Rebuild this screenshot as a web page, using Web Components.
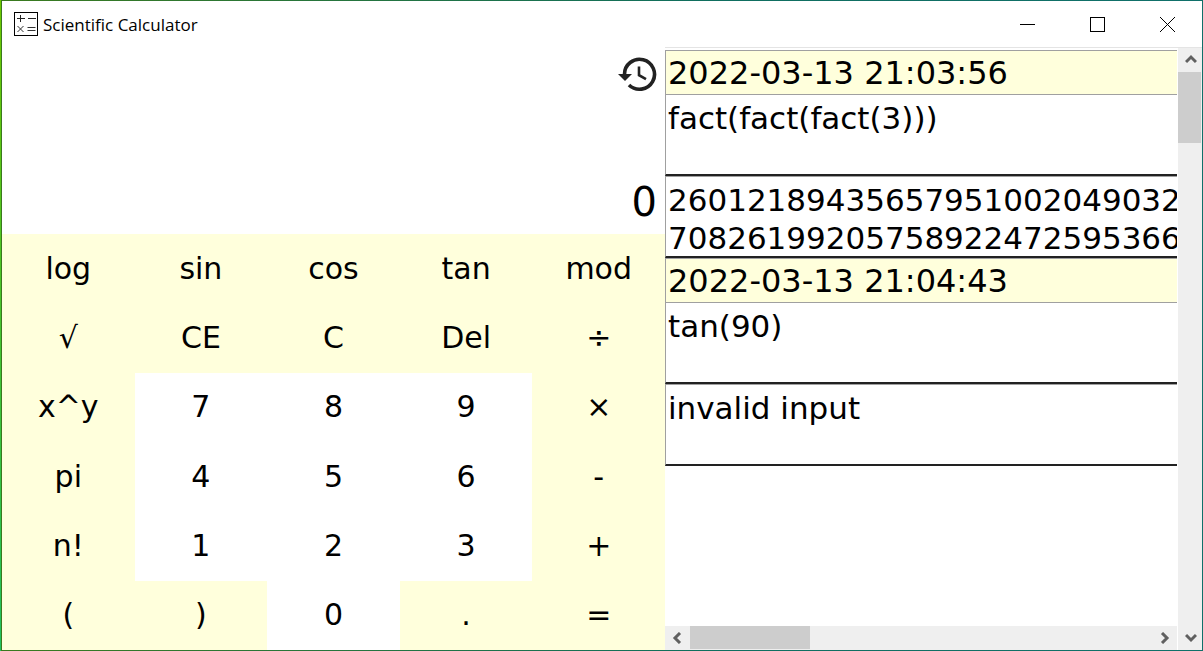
<!DOCTYPE html>
<html lang="en">
<head>
<meta charset="utf-8">
<title>Scientific Calculator</title>
<style>
  html, body { margin: 0; height: 100%; background: #fff; }
  body { font-family: "DejaVu Sans", Verdana, sans-serif; color: #000; }
</style>
</head>
<body>
<calc-window></calc-window>

<script>
const define = (name, html, setup) => {
  const template = document.createElement('template');
  template.innerHTML = '<style>*{box-sizing:border-box}button{font:inherit;color:inherit;border:0;padding:0;margin:0;background:none}</style>' + html;
  customElements.define(name, class extends HTMLElement {
    constructor() {
      super();
      this.attachShadow({ mode: 'open' }).append(template.content.cloneNode(true));
    }
    connectedCallback() { if (setup) setup(this, this.shadowRoot); }
  });
};

define('calc-titlebar', `
<style>
  :host { display: flex; align-items: stretch; height: 46px; }
  .name { display: flex; align-items: center; gap: 5px; flex: 1; padding-left: 12px; }
  h1 { margin: 0; padding-top: 2px; font: 400 17px/24px "Open Sans", "Noto Sans", sans-serif; }
  button { width: 70px; display: grid; place-items: center; }
  svg { display: block; fill: none; stroke: #000; }
</style>
<div class="name">
  <svg width="24" height="24" viewBox="0 0 24 24" aria-hidden="true">
    <rect x=".5" y=".5" width="23" height="23"/>
    <path d="M3 6.500h8M6.500 3v7M14 6.500h8" stroke="#222"/>
    <path d="M3.500 14l6 6M9.500 14l-6 6" stroke="#333"/>
    <path d="M13.500 15.500h8M13.500 18.500h8" stroke="#333"/>
  </svg>
  <h1>Scientific Calculator</h1>
</div>
<button aria-label="Minimize"><svg width="15" height="15"><path d="M0 7.500h15"/></svg></button>
<button aria-label="Maximize"><svg width="15" height="15"><rect x=".5" y=".5" width="14" height="14"/></svg></button>
<button aria-label="Close"><svg width="15" height="15"><path d="M0 0l15 15M15 0L0 15"/></svg></button>
`);

define('calc-display', `
<style>
  :host { display: flex; flex-direction: column; justify-content: space-between; align-items: flex-end; padding: 9px 8px 8px; }
  button { width: 40px; height: 36px; }
  svg { display: block; }
  output { font-size: 40px; line-height: 48px; }
</style>
<button aria-label="History">
  <svg width="40" height="36" viewBox="0 0 40 36">
    <path d="M7.500 18.500A15 15 0 1 1 12 29" fill="none" stroke="#222" stroke-width="3.600"/>
    <path d="M1 18h14l-7 7z" fill="#222"/>
    <path d="M22 10.500v8.700l7 4" fill="none" stroke="#222" stroke-width="2.600"/>
  </svg>
</button>
<output>0</output>
`);

define('calc-key', `
<style>
  :host { display: grid; background: #ffffdc; }
  :host([digit]) { background: #fff; }
  button { font-size: 30px; line-height: 36px; }
</style>
<button><slot></slot></button>
`);

define('calc-keypad', `
<style>
  :host { display: grid; grid-template: repeat(6, 1fr) / repeat(5, 1fr); min-height: 0; background: #ffffdc; }
</style>
`, (host, root) => {
  for (const label of 'log sin cos tan mod √ CE C Del ÷ x^y 7 8 9 × pi 4 5 6 - n! 1 2 3 + ( ) 0 . ='.split(' ')) {
    const key = document.createElement('calc-key');
    key.textContent = label;
    key.toggleAttribute('digit', /^\d$/.test(label));
    root.append(key);
  }
});

define('history-entry', `
<style>
  :host { display: block; font-size: 31px; line-height: 38px; }
  div { border: 1px solid #a0a0a0; border-right: 0; border-bottom: 0; padding: 3px 0 0 2px; overflow: hidden; white-space: nowrap; }
  .date { height: 44px; font-size: 32px; background: #ffffdc; }
  .text { height: 82px; padding-top: 4px; border-bottom: 2px solid #222; }
</style>
<div class="date"><slot name="date"></slot></div>
<div class="text"><slot name="expression"></slot></div>
<div class="text"><slot name="result"></slot></div>
`);

define('scroll-bar', `
<style>
  :host { display: flex; background: #efefef; min-width: 0; min-height: 0; }
  :host([vertical]) { flex-direction: column; }
  button { width: 25px; height: 24px; display: grid; place-items: center; flex: none; }
  .track { flex: 1; display: flex; }
  .thumb { background: #cdcdcd; width: 120px; height: 23px; }
  :host([vertical]) .thumb { width: 23px; height: 71px; }
  svg { display: block; fill: none; stroke: #606060; stroke-width: 3; }
  :host([vertical]) svg { transform: rotate(90deg); }
</style>
<button aria-label="Scroll back"><svg width="12" height="12"><path d="M8 1L3 6l5 5"/></svg></button>
<div class="track"><div class="thumb"></div></div>
<button aria-label="Scroll forward"><svg width="12" height="12"><path d="M3 1l5 5-5 5"/></svg></button>
`);

define('calc-history', `
<style>
  :host { display: grid; grid-template: minmax(0, 1fr) 24px / minmax(0, 1fr) 24px; column-gap: 1px; min-height: 0; border-top: 1px solid #e4e4e4; }
  .list { overflow: hidden; padding-top: 2px; }
  .down { grid-area: 1 / 2 / 3 / 3; }
</style>
<div class="list"><slot></slot></div>
<scroll-bar></scroll-bar>
<scroll-bar class="down" vertical></scroll-bar>
`);

define('calc-window', `
<style>
  :host { display: grid; grid-template: 46px minmax(0, 1fr) / 100%; height: 100vh; box-sizing: border-box;
    padding: 1px 1px 1px 2px;
    background: linear-gradient(#6cc800, #20c060) left / 1px 100% no-repeat,
      linear-gradient(90deg, #3a7a1e, #0f6e60 60%, #10706a); }
  calc-titlebar, main { background: #fff; }
  main { display: grid; grid-template-columns: minmax(0, 663fr) minmax(0, 537fr); min-height: 0; }
  .pad { display: grid; grid-template-rows: 187px minmax(0, 1fr); min-height: 0; }
</style>
<calc-titlebar></calc-titlebar>
<main>
  <div class="pad">
    <calc-display></calc-display>
    <calc-keypad></calc-keypad>
  </div>
  <calc-history>
    <history-entry>
      <span slot="date">2022-03-13 21:03:56</span>
      <span slot="expression">fact(fact(fact(3)))</span>
      <span slot="result">26012189435657951002049032<br>708261992057589224725953664</span>
    </history-entry>
    <history-entry>
      <span slot="date">2022-03-13 21:04:43</span>
      <span slot="expression">tan(90)</span>
      <span slot="result">invalid input</span>
    </history-entry>
  </calc-history>
</main>
`);
</script>
</body>
</html>
